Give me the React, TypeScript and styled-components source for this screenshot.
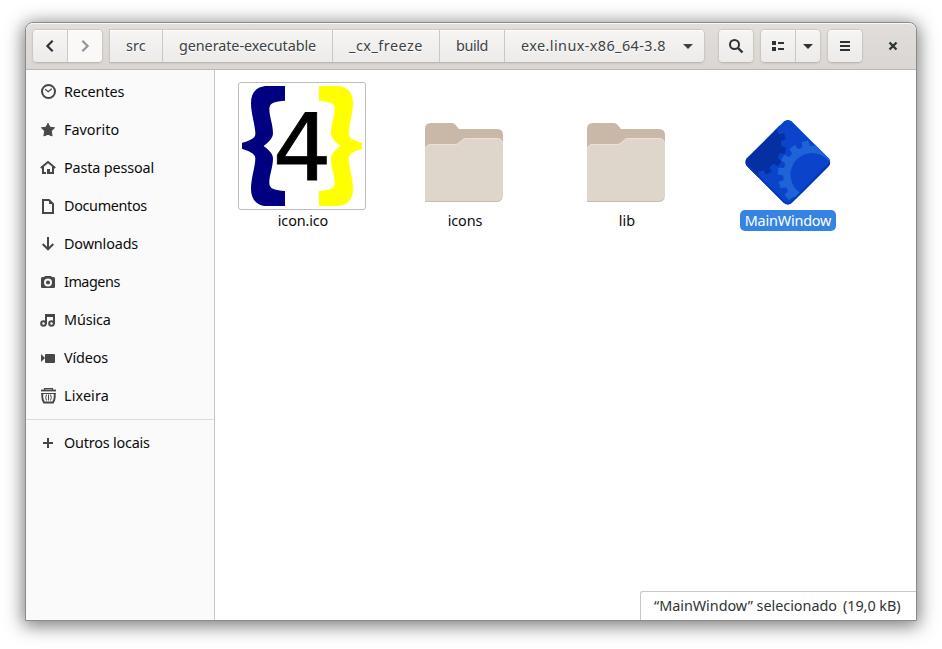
import React from "react";
import styled, { createGlobalStyle, css } from "styled-components";

const GlobalStyle = createGlobalStyle`
  html, body { margin: 0; padding: 0; background: #fff; overflow: hidden; }
  * { box-sizing: border-box; }
`;

const Desktop = styled.div`
  width: 942px;
  height: 649px;
  padding: 22px 25px 28px;
  background: #fff;
  font-family: "Noto Sans", "Open Sans", sans-serif;
  font-size: 14.4px;
  line-height: 20px;
  color: #0c0c0c;
`;

const Window = styled.div`
  display: flex;
  flex-direction: column;
  width: 892px;
  height: 599px;
  border: 1px solid #8b8b8b;
  border-radius: 8px 8px 0 0;
  overflow: hidden;
  background: #fff;
  box-shadow: 0 3px 18px 2px rgba(0, 0, 0, 0.52);
`;

const HeaderBar = styled.header`
  display: flex;
  align-items: flex-start;
  flex: none;
  height: 47px;
  padding: 6px 6px 0;
  border-bottom: 1px solid #bfb8b1;
  background: linear-gradient(to top, #dad6d2, #e1dedb);
  box-shadow: inset 0 1px #f8f7f7;
  border-radius: 7px 7px 0 0;
`;

const ButtonGroup = styled.div<{ $gap?: number; $squareStart?: boolean }>`
  display: flex;
  height: 34px;
  margin-right: ${(p) => p.$gap ?? 6}px;
  border: 1px solid #cdc7c2;
  border-bottom-color: #bfb8b1;
  border-radius: ${(p) => (p.$squareStart ? "0 5px 5px 0" : "5px")};
  overflow: hidden;
  box-shadow: 0 1px 2px rgba(0, 0, 0, 0.07);
`;

const HeaderButton = styled.button<{ $width: number; $disabled?: boolean }>`
  display: flex;
  align-items: center;
  justify-content: center;
  flex: none;
  width: ${(p) => p.$width}px;
  height: 32px;
  padding: 0;
  border: 0;
  color: #2e3436;
  background: linear-gradient(to top, #edebe9, #f6f5f4);
  box-shadow: inset 0 1px #fff;
  & + & { border-left: 1px solid #cdc7c2; }
  ${(p) => p.$disabled && css`
    color: #929595;
    background: #faf9f8;
  `}
`;

const PathButton = styled(HeaderButton)<{ $spacing?: number }>`
  justify-content: flex-start;
  padding-left: 16px;
  font: inherit;
  line-height: 32px;
  letter-spacing: ${(p) => p.$spacing ?? 0}px;
  color: #3c4143;
  text-shadow: 0 1px #fff;
  white-space: nowrap;
  svg { margin-left: auto; margin-right: 8px; }
`;

const CloseButton = styled.button`
  display: grid;
  place-items: center;
  width: 34px;
  height: 34px;
  margin-left: 7px;
  padding: 0;
  border: 0;
  background: none;
  color: #2e3436;
`;

const Body = styled.div`
  display: flex;
  flex: 1;
  min-height: 0;
`;

const Sidebar = styled.nav`
  flex: none;
  width: 189px;
  padding-top: 3px;
  border-right: 1px solid #cdc7c2;
  background: #fafafa;
`;

const Place = styled.div<{ $spacing?: number }>`
  display: flex;
  align-items: center;
  gap: 8px;
  height: 38px;
  padding-left: 14px;
  letter-spacing: ${(p) => p.$spacing ?? 0}px;
  white-space: nowrap;
  svg { flex: none; color: #474747; }
`;

const Divider = styled.div`
  height: 1px;
  margin: 4px 0;
  background: #dcdcdc;
`;

const Content = styled.main`
  position: relative;
  flex: 1;
  background: #fff;
`;

const FileGrid = styled.div`
  display: grid;
  grid-template-columns: repeat(4, 128px);
  column-gap: 34px;
  padding: 12px 0 0 23px;
`;

const FileItem = styled.figure`
  display: flex;
  flex-direction: column;
  align-items: center;
  margin: 0;
`;

const FileIcon = styled.div<{ $framed?: boolean }>`
  display: flex;
  align-items: flex-end;
  justify-content: center;
  width: 128px;
  height: 128px;
  ${(p) => p.$framed && css`
    border: 1px solid #bdbdb9;
    border-radius: 3px;
  `}
  svg { display: block; }
`;

const FileName = styled.figcaption<{ $selected?: boolean; $spacing?: number }>`
  height: 21px;
  padding: 0 5px;
  border-radius: 5px;
  line-height: 21px;
  letter-spacing: ${(p) => p.$spacing ?? 0}px;
  margin-left: 2px;
  white-space: nowrap;
  ${(p) => p.$selected && css`
    margin-left: 0;
    color: #fff;
    background: #3584e4;
  `}
`;

const StatusBar = styled.div`
  position: absolute;
  right: 0;
  bottom: 0;
  display: flex;
  gap: 6px;
  width: 276px;
  height: 29px;
  padding: 0 0 0 13px;
  border: 1px solid #cdc7c2;
  border-width: 1px 0 0 1px;
  border-radius: 3px 0 0 0;
  background: #fff;
  color: #2e3436;
  line-height: 28px;
  letter-spacing: -0.03px;
  white-space: nowrap;
`;

type IconProps = { children: React.ReactNode; size?: number };
const Icon = ({ children, size = 16 }: IconProps) => (
  <svg width={size} height={size} viewBox="0 0 16 16" fill="none" stroke="currentColor" strokeWidth="2">
    {children}
  </svg>
);

const Caret = () => (
  <Icon><path d="M3 6h10l-5 5z" fill="currentColor" stroke="none" /></Icon>
);

const places: { name: string; spacing?: number; icon: React.ReactNode }[] = [
  { name: "Recentes", spacing: -0.12, icon: <><circle cx="8.5" cy="7.5" r="6.5" /><path d="M5.2 5.2l3 2.5 3.6-3" strokeWidth="1.200" /></> },
  { name: "Favorito", icon: <path d="M8 1.2l1.9 4 4.6.5-3.2 3.4.8 4.8L8 12.3l-4.1 1.6.8-4.8L1.5 5.7l4.6-.5z" fill="currentColor" strokeWidth="1" strokeLinejoin="round" /> },
  { name: "Pasta pessoal", spacing: -0.14, icon: <><path d="M.8 8L8 2l7.2 6" /><path d="M3 7v6h3M13 7v6h-3" /><path d="M7 14V9h3v5" fill="currentColor" stroke="none" /></> },
  { name: "Documentos", spacing: -0.34, icon: <><path d="M3 2h6l4 4v9H3z" /><path d="M9 2v4h4z" fill="currentColor" stroke="none" /></> },
  { name: "Downloads", spacing: -0.14, icon: <path d="M8 1v12M2.7 8L8 13.3 13.3 8" /> },
  { name: "Imagens", spacing: -0.48, icon: <><path d="M1 4.5Q1 3 2.5 3H4l1-1h6l1 1h1.500Q15 3 15 4.500V13q0 1-1 1H2q-1 0-1-1z" fill="currentColor" stroke="none" /><circle cx="8" cy="8.500" r="3" stroke="#fafafa" /></> },
  { name: "Música", spacing: -0.12, icon: <><circle cx="3.500" cy="11.500" r="2.300" /><circle cx="11.500" cy="11.500" r="2.300" /><path d="M6 12V3h8v9" /><path d="M6 4h8" /></> },
  { name: "Vídeos", spacing: -0.16, icon: <path d="M1 4l4 4-4 4zM6 4h8q1 0 1 1v7q0 1-1 1H6q-1 0-1-1V5q0-1 1-1z" fill="currentColor" stroke="none" /> },
  { name: "Lixeira", spacing: 0.1, icon: <><path d="M1 2.500h15" strokeWidth="1.800" /><path d="M4.500 2V.6h8V2" strokeWidth="1.200" /><path d="M1 5.500h15" strokeWidth="1" /><path d="M2.500 5.500Q1.500 10.500 4 14.500h9Q15.500 10.500 14.500 5.500" strokeWidth="1.900" /><path d="M6.500 6.500q-1.600 3 0 6M8.500 6.500v6M10.500 6.500q1.600 3 0 6" strokeWidth="1" /></> },
];

const BRACE =
  "M165 33H112C80 33 63 53 63 84C63 118 76 148 76 178C76 192 50 200 36 204V221C50 226 76 234 76 249C76 276 63 308 63 342C63 373 80 393 112 393H165V348C136 346 118 343 118 324C118 299 129 278 129 250C129 235 113 222 101 213C113 204 129 191 129 175C129 148 118 125 118 101C118 83 136 79 165 77Z";

const IconFile = () => (
  <svg width="126" height="126" viewBox="27 24 378 378">
    <path d={BRACE} fill="#000080" />
    <path d={BRACE} fill="#ff0" transform="translate(432 0) scale(-1 1)" />
    <text x="128" y="314" fontFamily="DejaVu Sans" fontSize="277" stroke="#000" strokeWidth="2.500">4</text>
  </svg>
);

const Folder = () => (
  <svg width="128" height="128" viewBox="0 0 128 128">
    <path d="M25 50V47q0-6 6-6h21q2 0 3.500 1.700L59 47h38q6 0 6 6v15H25z" fill="#c9b8a8" />
    <path d="M25 69q0-7 6-7h24q2 0 3.500-1.500L63 57q1-1 3-1h31q6 0 6 7v50q0 7-6 7H25z" fill="#ded5cb" />
    <path d="M25 69q0-6.500 6-6.500h25q2 0 3.500-1.500L63 57.500q1-1 3-1h31q5.500 0 5.500 6" fill="none" stroke="#e9e2da" />
    <path d="M25 119.500h72q3.500 0 5-3" fill="none" stroke="#c9bdb1" />
  </svg>
);

/** Builds the outline of a toothed wheel around (cx, cy). */
const gear = (cx: number, cy: number, inner: number, outer: number, teeth: number, phase: number) => {
  const step = 360 / teeth;
  const point = (r: number, deg: number) => {
    const a = (deg * Math.PI) / 180;
    return `${(cx + r * Math.cos(a)).toFixed(2)} ${(cy + r * Math.sin(a)).toFixed(2)}`;
  };
  const points: string[] = [];
  for (let i = 0; i < teeth; i++) {
    const a = phase + i * step;
    points.push(point(inner, a - 7.5), point(outer, a - 5.5), point(outer, a + 5.5), point(inner, a + 7.5));
  }
  return `M${points.join("L")}Z`;
};

const DIAMOND = "M175 35Q187 25 199 35L310 146Q319 157 310 169L199 280Q187 290 175 280L64 169Q55 157 64 146Z";

const Executable = () => (
  <svg width="128" height="128" viewBox="-4.500 -83 384 384">
    <defs><clipPath id="diamond"><path d={DIAMOND} /></clipPath></defs>
    <g clipPath="url(#diamond)">
      <path d={DIAMOND} fill="#0a44cb" />
      <path d={gear(85, 105, 82, 97, 14, -15)} fill="#0530a3" />
      <path d={gear(260, 195, 87, 103, 15, -102)} fill="#1f63d9" />
      <circle cx="260" cy="195" r="65" fill="#0a44cb" />
      <path d="M60 160L175 277Q187 288 199 277L314 160" fill="none" stroke="#0738b5" strokeWidth="7" />
    </g>
  </svg>
);

export default function App() {
  return (
    <>
      <GlobalStyle />
      <Desktop>
        <Window>
          <HeaderBar>
            <ButtonGroup>
              <HeaderButton $width={34}><Icon><path d="M10.700 2.700L5.400 8l5.300 5.300" strokeWidth="2.200" /></Icon></HeaderButton>
              <HeaderButton $width={35} $disabled><Icon><path d="M5.300 2.700L10.600 8l-5.300 5.300" strokeWidth="2.200" /></Icon></HeaderButton>
            </ButtonGroup>
            <ButtonGroup $squareStart $gap={13}>
              <PathButton $width={52} $spacing={0.15}>src</PathButton>
              <PathButton $width={170} $spacing={-0.08}>generate-executable</PathButton>
              <PathButton $width={107} $spacing={0.5}>_cx_freeze</PathButton>
              <PathButton $width={65} $spacing={-0.4}>build</PathButton>
              <PathButton $width={200} $spacing={0.42}>exe.linux-x86_64-3.8<Caret /></PathButton>
            </ButtonGroup>
            <ButtonGroup>
              <HeaderButton $width={34}><Icon><circle cx="6.500" cy="6.500" r="4.500" /><path d="M10 10l4.500 4.500" strokeWidth="2.400" /></Icon></HeaderButton>
            </ButtonGroup>
            <ButtonGroup>
              <HeaderButton $width={34}><Icon><path d="M2 3h4v4H2zM2 9h4v4H2zM8 4h6v2H8zM8 10h6v2H8z" fill="currentColor" stroke="none" /></Icon></HeaderButton>
              <HeaderButton $width={25}><Caret /></HeaderButton>
            </ButtonGroup>
            <ButtonGroup>
              <HeaderButton $width={34}><Icon><path d="M3 4h10M3 8h10M3 12h10" /></Icon></HeaderButton>
            </ButtonGroup>
            <CloseButton><Icon><path d="M4.500 4.500l7 7M11.500 4.500l-7 7" strokeWidth="2.300" /></Icon></CloseButton>
          </HeaderBar>
          <Body>
            <Sidebar>
              {places.map((p) => (
                <Place key={p.name} $spacing={p.spacing}><Icon>{p.icon}</Icon>{p.name}</Place>
              ))}
              <Divider />
              <Place $spacing={-0.2}><Icon><path d="M8 3v10M3 8h10" /></Icon>Outros locais</Place>
            </Sidebar>
            <Content>
              <FileGrid>
                <FileItem><FileIcon $framed><IconFile /></FileIcon><FileName $spacing={-0.12}>icon.ico</FileName></FileItem>
                <FileItem><FileIcon><Folder /></FileIcon><FileName $spacing={-0.12}>icons</FileName></FileItem>
                <FileItem><FileIcon><Folder /></FileIcon><FileName>lib</FileName></FileItem>
                <FileItem><FileIcon><Executable /></FileIcon><FileName $selected $spacing={-0.18}>MainWindow</FileName></FileItem>
              </FileGrid>
              <StatusBar><span>“MainWindow” selecionado</span><span>(19,0 kB)</span></StatusBar>
            </Content>
          </Body>
        </Window>
      </Desktop>
    </>
  );
}
